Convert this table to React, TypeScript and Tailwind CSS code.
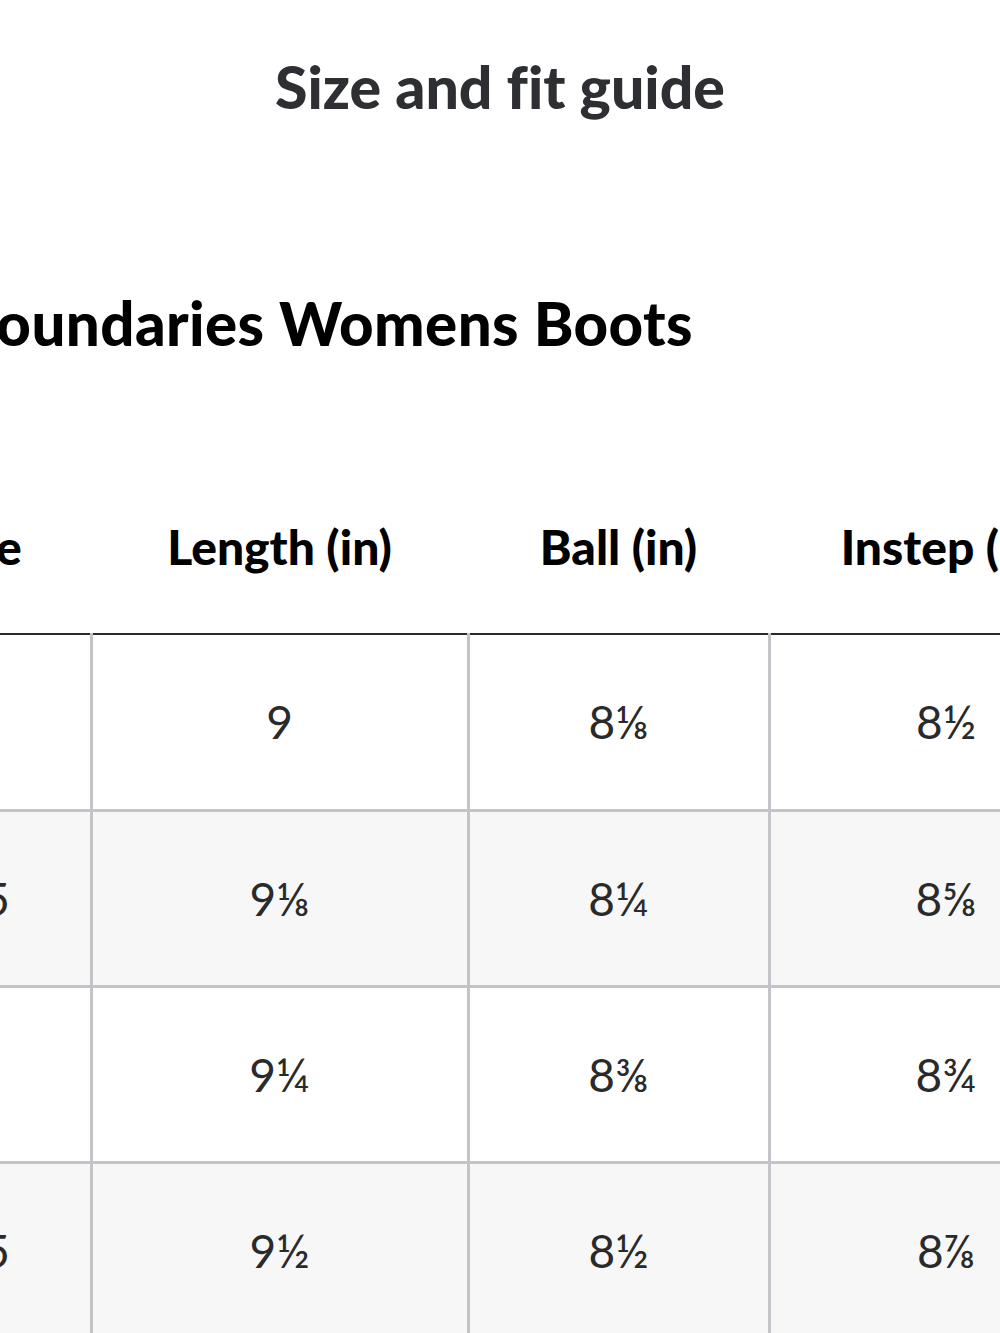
import React from 'react'

type Row = { size: string; length: string; ball: string; instep: string }

const rows: Row[] = [
  { size: '6', length: '9', ball: '8⅛', instep: '8½' },
  { size: '6.5', length: '9⅛', ball: '8¼', instep: '8⅝' },
  { size: '7', length: '9¼', ball: '8⅜', instep: '8¾' },
  { size: '7.5', length: '9½', ball: '8½', instep: '8⅞' },
]

export default function App() {
  return (
    <div
      className="w-[1000px] h-[1333px] overflow-hidden bg-white"
      style={{ fontFamily: 'Lato, "Open Sans", "Liberation Sans", sans-serif' }}
    >
      {/* page title */}
      <h1 className="pt-[54px] h-[120px] text-center text-[59px] leading-[66px] font-black text-[#2e2f32] [font-variant-ligatures:none]">
        Size and fit guide
      </h1>

      <div className="overflow-hidden">
        {/* product name, cut off at the left edge */}
        <h2 className="mt-[170px] -ml-[139px] h-[66px] whitespace-nowrap text-[60px] leading-[66px] font-black text-black tracking-[0.4px]">
          No Boundaries Womens Boots
        </h2>

        {/* size table */}
        <table className="mt-[105px] -ml-[134px] border-collapse table-fixed w-[1257px]">
          <colgroup>
            <col className="w-[225px]" />
            <col className="w-[377px]" />
            <col className="w-[301px]" />
            <col className="w-[354px]" />
          </colgroup>
          <thead>
            <tr className="h-[173px]">
              {['Size', 'Length (in)', 'Ball (in)', 'Instep (in)'].map((h) => (
                <th
                  key={h}
                  className="border-b-2 border-[#2a2a2a] text-center text-[48px] font-black text-black whitespace-nowrap"
                >
                  {h}
                </th>
              ))}
            </tr>
          </thead>
          <tbody>
            {rows.map((r, i) => (
              <tr key={r.size} className={i % 2 === 1 ? 'h-[176px] bg-[#f7f7f8]' : 'h-[176px] bg-white'}>
                {[r.size, r.length, r.ball, r.instep].map((v, j) => (
                  <td
                    key={j}
                    className="border-b-[3px] border-r-[3px] border-[#c4c4c8] text-center text-[46px] text-[#2a2a2a]"
                  >
                    {v}
                  </td>
                ))}
              </tr>
            ))}
          </tbody>
        </table>
      </div>
    </div>
  )
}
